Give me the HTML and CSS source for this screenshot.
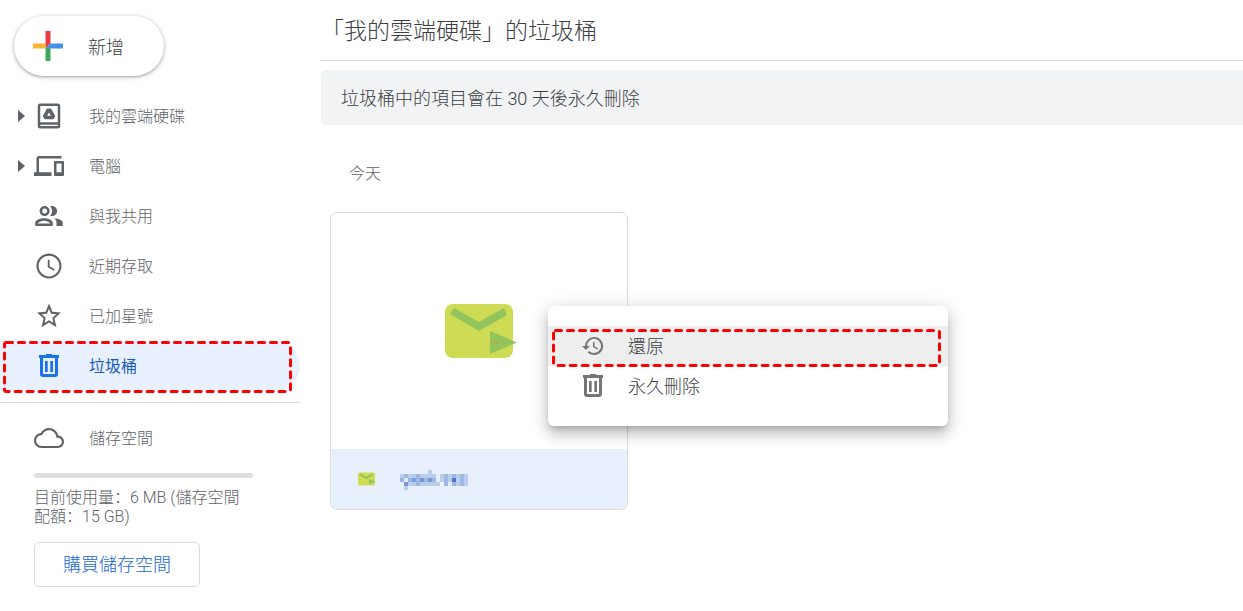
FILE: index.html
```html
<!DOCTYPE html>
<html lang="zh-Hant">
<head>
    <meta charset="UTF-8">
    <meta name="viewport" content="width=device-width, initial-scale=1.0">
    <title>垃圾桶 - 雲端硬碟</title>
    <link rel="stylesheet" href="styles.css">
</head>
<body>
    <div class="app">
        <!-- 側邊欄 -->
        <aside class="sidebar">
            <button class="new-button" type="button">
                <svg width="30" height="30" viewBox="0 0 30 30">
                    <path fill="#ea3a3f" d="M12.500 0h5v12.500l-5 5z"/>
                    <path fill="#fbb535" d="M0 12.500h12.500v5H0z"/>
                    <path fill="#3fa758" d="M12.500 17.500l2.500-2.500h2.500v15h-5z"/>
                    <path fill="#4490ea" d="M17.500 12.500H30v5H12.500z"/>
                </svg>
                新增
            </button>
            <nav class="nav">
                <a class="nav-item" href="#">
                    <svg class="arrow" width="7" height="12" viewBox="0 0 7 12"><path d="M0 0l7 6-7 6z"/></svg>
                    <svg class="icon" viewBox="0 0 24 24"><path d="M19 2H5a2 2 0 0 0-2 2v16a2 2 0 0 0 2 2h14a2 2 0 0 0 2-2V4a2 2 0 0 0-2-2zm0 18H5v-1h14zm0-3H5V4h14z"/><path d="M13.600 6h-3.200L7 12l1.400 2.500h7.200L17 12zm-1.600 3.200l1.500 2.600h-3z"/></svg>
                    我的雲端硬碟
                </a>
                <a class="nav-item" href="#">
                    <svg class="arrow" width="7" height="12" viewBox="0 0 7 12"><path d="M0 0l7 6-7 6z"/></svg>
                    <svg class="icon" viewBox="0 0 24 24"><path d="M4 6h18V4H4c-1.100 0-2 .900-2 2v11H0v3h14v-3H4V6zm19 2h-6c-.550 0-1 .450-1 1v10c0 .550.450 1 1 1h6c.550 0 1-.450 1-1V9c0-.550-.450-1-1-1zm-1 9h-4v-7h4v7z"/></svg>
                    電腦
                </a>
                <a class="nav-item" href="#">
                    <svg class="icon" viewBox="0 0 24 24"><path d="M8 13.750c-2.340 0-7 1.170-7 3.500V20h14v-2.750c0-2.330-4.660-3.500-7-3.500zM2.900 18c.500-.900 2.700-2.250 5.100-2.250s4.600 1.350 5.100 2.250H2.900zM8.500 12c2.200 0 4-1.800 4-4s-1.800-4-4-4-4 1.800-4 4 1.800 4 4 4zm0-6c1.100 0 2 .900 2 2s-.900 2-2 2-2-.900-2-2 .900-2 2-2zm7.540 7.810c1.160.840 1.960 1.960 1.960 3.440V20h5v-2.750c0-2.020-3.900-3.170-6.960-3.440zM14.500 12c2.200 0 4-1.800 4-4s-1.800-4-4-4c-.540 0-1.050.110-1.520.300.960 1 1.520 2.300 1.520 3.700s-.560 2.700-1.520 3.700c.470.190.980.300 1.520.300z"/></svg>
                    與我共用
                </a>
                <a class="nav-item" href="#">
                    <svg class="icon" viewBox="0 0 24 24"><path d="M12 2C6.500 2 2 6.500 2 12s4.500 10 10 10 10-4.500 10-10S17.500 2 12 2zm0 18.300c-4.600 0-8.300-3.700-8.300-8.300S7.400 3.700 12 3.700s8.300 3.700 8.300 8.300-3.700 8.300-8.300 8.300z"/><path d="M12.500 7H11v6l4.900 2.700.700-1.200-4.100-2.300z"/></svg>
                    近期存取
                </a>
                <a class="nav-item" href="#">
                    <svg class="icon" viewBox="0 0 24 24"><path d="M21.500 9.240l-6.800-.620L12 2 9.300 8.630 2.500 9.240l5.160 4.730L6.020 21 12 17.270 17.980 21l-1.630-7.030zM12 15.400l-3.560 2.270.9-4.280-3.220-2.880 4.280-.380L12 6.100l1.610 4.040 4.280.380-3.220 2.880.9 4.280z"/></svg>
                    已加星號
                </a>
                <a class="nav-item active" href="#">
                    <svg class="icon" viewBox="0 0 30 30"><path d="M18 4v-1h-6v1H5v3h1v16a3 3 0 0 0 3 3h12a3 3 0 0 0 3-3V7h1V4zm3 19H9V7h12z"/><path d="M11 10h2.700v11H11zM16.300 10H19v11h-2.700z"/></svg>
                    垃圾桶
                    <svg class="marker" width="289" height="52" viewBox="0 0 289 52"><rect x="1.500" y="1.500" width="286" height="49" rx="2"/></svg>
                </a>
            </nav>
            <section class="storage">
                <a class="nav-item" href="#">
                    <svg class="icon" viewBox="0 0 24 24"><path d="M19.350 10.040C18.670 6.590 15.640 4 12 4 9.110 4 6.600 5.640 5.350 8.040 2.340 8.360 0 10.910 0 14c0 3.310 2.690 6 6 6h13c2.760 0 5-2.240 5-5 0-2.640-2.050-4.780-4.650-4.960zM19 18.300H6c-2.400 0-4.300-1.900-4.300-4.300 0-2.200 1.700-4.100 3.900-4.300l.900-.100.400-.800C7.900 6.900 9.900 5.700 12 5.700c2.800 0 5.200 2 5.700 4.700l.300 1.300 1.300.100c1.700.100 3 1.500 3 3.200 0 1.800-1.500 3.300-3.300 3.300z"/></svg>
                    儲存空間
                </a>
                <div class="quota">
                    <div class="quota-bar"></div>
                    <p class="quota-text" lang="zh-Hans">目前使用量：6 MB (儲存空間配額：15 GB)</p>
                    <button class="buy-button" type="button">購買儲存空間</button>
                </div>
            </section>
        </aside>

        <!-- 主要內容 -->
        <main class="main">
            <h1 class="title">「我的雲端硬碟」的垃圾桶</h1>
            <p class="banner">垃圾桶中的項目會在 30 天後永久刪除</p>
            <h2 class="group">今天</h2>
            <div class="file-area">
                <article class="card">
                    <div class="preview">
                        <svg width="74" height="54" viewBox="0 0 74 54">
                            <rect width="68" height="54" rx="8" fill="#cedb55"/>
                            <path fill="#91c55b" d="M9 4l25 14L59 4l3 7-28 16L5 10zM45 27l27 11.500L45 50z"/>
                            <path fill="#a8b957" d="M45 37l22 1.500-22 1.500z"/>
                            <path stroke="#e07a4a" stroke-dasharray="1 2" d="M46 38.500h8"/>
                        </svg>
                    </div>
                    <div class="card-footer">
                        <svg width="18" height="14" viewBox="0 0 74 54">
                            <rect width="70" height="54" rx="8" fill="#cedb55"/>
                            <path fill="#91c55b" d="M9 4l25 14L59 4l3 7-28 16L5 10zM45 27l27 11.500L45 50z"/>
                        </svg>
                        <!-- 已遮蔽的檔名 -->
                        <svg class="masked" width="68" height="20" viewBox="0 0 17 5" shape-rendering="crispEdges">
                            <path fill="#b9cdec" d="M0 1h9v3H1V3H0zM10 1h7v3h-6V3h-1zM7 0h1v1H7zM1 4h1v1H1zM8 3h2v1H8z"/>
                            <path fill="#9db6e2" d="M1 1h1v1H1zM0 2h1v1H0zM2 2h1v1H2zM4 1h1v3H4zM6 2h1v1H6zM8 2h1v1H8zM11 1h1v3h-1zM15 1h1v3h-1zM13 1h1v3h-1z"/>
                            <path fill="#e3ebf9" d="M1 2h1v1H1zM12 3h1v1h-1z"/>
                            <path fill="#7d96cd" d="M1 3h1v1H1zM5 2h1v1H5zM7 2h1v1H7z"/>
                            <path fill="#72a3df" d="M3 2h1v1H3z"/>
                            <path fill="#4d78cf" d="M13 2h1v1h-1z"/>
                        </svg>
                    </div>
                </article>
                <!-- 右鍵選單 -->
                <div class="menu" role="menu">
                    <button class="menu-item selected" type="button" role="menuitem">
                        <svg class="menu-icon" viewBox="0 0 24 24"><path d="M13 3a9 9 0 0 0-9 9H1l3.900 3.900L9 12H6a7 7 0 1 1 2.100 4.900l-1.400 1.400A9 9 0 1 0 13 3zm-1 5v5l4.300 2.500.700-1.200-3.500-2.100V8z"/></svg>
                        還原
                        <svg class="marker" width="389" height="38" viewBox="0 0 389 38"><rect x="1.500" y="1.500" width="386" height="35" rx="2"/></svg>
                    </button>
                    <button class="menu-item" type="button" role="menuitem">
                        <svg class="menu-icon" viewBox="0 0 24 24"><path d="M15 1V0H9v1H2v3h1v16a3 3 0 0 0 3 3h12a3 3 0 0 0 3-3V4h1V1zm3 19H6V4h12z"/><path d="M8 7h2.700v11H8zM13.300 7H16v11h-2.700z"/></svg>
                        永久刪除
                    </button>
                </div>
            </div>
        </main>
    </div>
</body>
</html>
```
FILE: styles.css
```css
* {
    box-sizing: border-box;
}
body {
    margin: 0;
    background: #fff;
    color: #5f6368;
    font-family: Roboto, "Noto Sans CJK TC", sans-serif;
    font-size: 16px;
    font-weight: 300;
}
button {
    font: inherit;
    cursor: pointer;
}
.app {
    display: flex;
    gap: 21px;
    min-height: 100vh;
}

/* 側邊欄 */
.sidebar {
    flex: 0 0 300px;
    padding-top: 16px;
}
.new-button {
    display: flex;
    align-items: center;
    gap: 25px;
    height: 60px;
    margin-left: 14px;
    padding: 0 40px 0 19px;
    border: none;
    border-radius: 30px;
    background: #fff;
    box-shadow: 0 1px 2px rgba(60, 64, 67, 0.3), 0 1px 4px 1px rgba(60, 64, 67, 0.2);
    color: #3c4043;
    font-size: 18px;
}
.nav {
    padding: 15px 0 11px;
    border-bottom: 1px solid #dadce0;
}
.nav-item {
    position: relative;
    display: flex;
    align-items: center;
    gap: 25px;
    height: 50px;
    padding: 0 0 2px 34px;
    border-radius: 0 25px 25px 0;
    color: #5f6368;
    text-decoration: none;
}
.icon {
    width: 30px;
    height: 30px;
    margin-top: 2px;
    fill: #5f6368;
}
.arrow {
    position: absolute;
    left: 18px;
    margin-top: 2px;
    fill: #5f6368;
}
.active {
    background: #e8f0fe;
    color: #185abc;
    font-weight: 400;
}
.active .icon {
    fill: #1a73e8;
}

/* 紅色虛線框 */
.marker {
    position: absolute;
    top: 0;
    left: 3px;
    pointer-events: none;
}
.marker rect {
    fill: none;
    stroke: #f00;
    stroke-width: 3px;
    stroke-dasharray: 6 6;
    stroke-linecap: round;
}

/* 儲存空間 */
.storage {
    padding-top: 10px;
}
.quota {
    padding: 10px 47px 0 34px;
}
.quota-bar {
    height: 5px;
    border-radius: 3px;
    background: #e0e0e0;
}
.quota-text {
    margin: 10px 0 16px;
    font-family: Roboto, "Noto Sans CJK SC", sans-serif;
    line-height: 19px;
}
.buy-button {
    height: 45px;
    padding: 0 28px 3px;
    border: 1px solid #dadce0;
    border-radius: 5px;
    background: #fff;
    color: #1967d2;
    font-size: 18px;
}

/* 主要內容 */
.main {
    flex: 1;
    min-width: 0;
}
.title {
    height: 61px;
    margin: 0;
    padding-top: 2px;
    border-bottom: 1px solid #dadce0;
    color: #3c4043;
    font-size: 23px;
    font-weight: 300;
    line-height: 60px;
}
.banner {
    margin: 9px 0 0;
    padding: 15px 20px 13px;
    border-radius: 4px 0 0 4px;
    background: #f1f3f4;
    color: #3c4043;
    font-size: 18px;
    line-height: 27px;
}
.group {
    margin: 36px 28px 26px;
    font-size: 16px;
    font-weight: 300;
    line-height: 25px;
}
.file-area {
    position: relative;
    padding-left: 9px;
}
.card {
    width: 298px;
    border: 1px solid #dadce0;
    border-radius: 7px;
    overflow: hidden;
}
.preview {
    display: flex;
    align-items: center;
    justify-content: center;
    height: 236px;
    padding-left: 6px;
}
.card-footer {
    display: flex;
    align-items: center;
    gap: 24px;
    height: 60px;
    padding-left: 27px;
    background: #e8f0fe;
}
.masked {
    margin-top: 2px;
}

/* 右鍵選單 */
.menu {
    position: absolute;
    top: 94px;
    left: 227px;
    width: 400px;
    padding: 20px 0;
    border-radius: 6px;
    background: #fff;
    box-shadow: 0 5px 6px -3px rgba(0, 0, 0, 0.2), 0 9px 14px 1px rgba(0, 0, 0, 0.14), 0 3px 18px 2px rgba(0, 0, 0, 0.12);
}
.menu-item {
    position: relative;
    display: flex;
    align-items: center;
    gap: 23px;
    width: 100%;
    height: 40px;
    padding: 0 0 2px 33px;
    border: none;
    background: none;
    color: #3c4043;
    font-size: 18px;
}
.menu-icon {
    width: 24px;
    height: 24px;
    margin-top: 2px;
    fill: #757575;
}
.selected {
    background: #eee;
}
.selected .marker {
    top: 3px;
    left: 4px;
}
```
